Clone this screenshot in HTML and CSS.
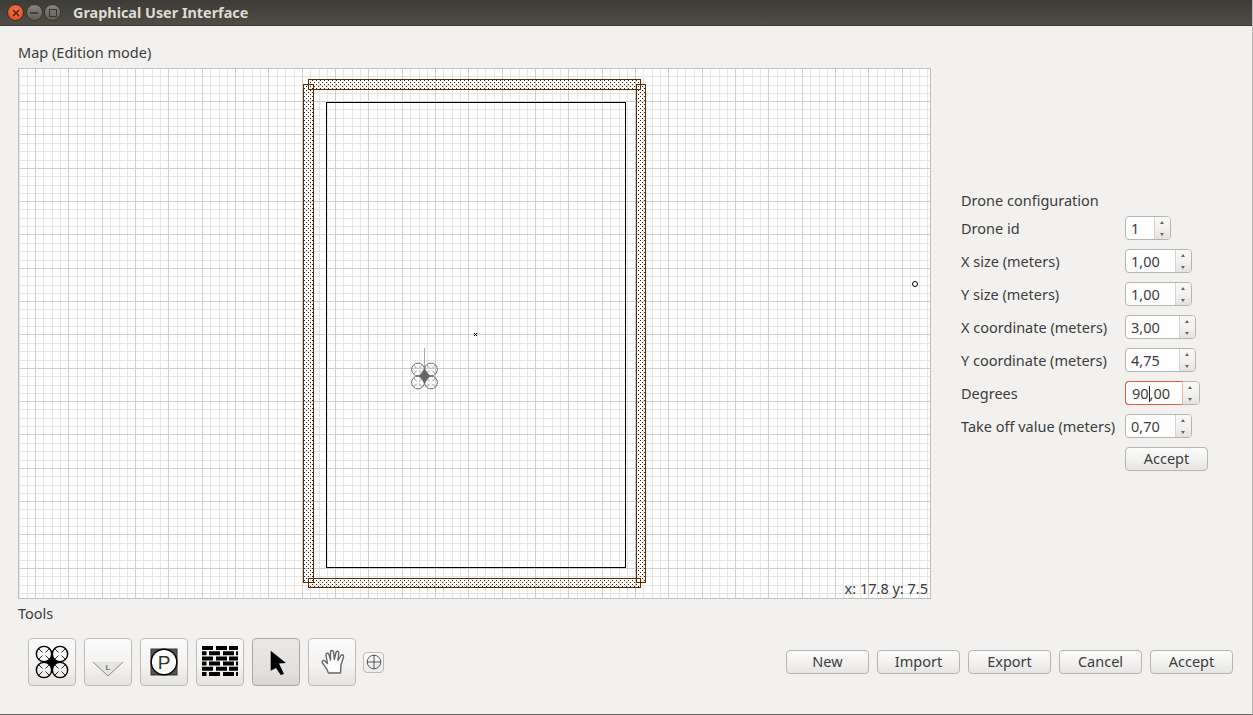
FILE: index.html
```html
<!DOCTYPE html>
<html lang="en">
<head>
<meta charset="utf-8">
<title>Graphical User Interface</title>
<link rel="stylesheet" href="styles.css">
</head>
<body>
<div class="window">
  <header class="titlebar">
    <div class="win-controls">
      <span class="win-btn win-close"><svg width="8" height="8" viewBox="0 0 8 8"><path d="M1 1L7 7M7 1L1 7" class="close-x"/></svg></span>
      <span class="win-btn win-min"><svg width="8" height="8" viewBox="0 0 8 8"><path d="M0 4H8" class="min-x"/></svg></span>
      <span class="win-btn win-max"><svg width="8" height="8" viewBox="0 0 8 8"><rect x="0.5" y="0.5" width="7" height="7" class="max-x"/></svg></span>
    </div>
    <h1 class="win-title">Graphical User Interface</h1>
  </header>

  <main class="content">
    <div class="workspace">
      <section class="map-col">
        <h2 class="group-title map-title">Map (Edition mode)</h2>
        <div class="map">
          <svg class="map-svg" width="911" height="529" viewBox="19 69 911 529">
            <defs>
              <pattern id="grid" patternUnits="userSpaceOnUse" x="2" y="68" width="100" height="100">
                <path class="minor" d="M8.5 0V100M17.5 0V100M25.5 0V100M41.5 0V100M50.5 0V100M58.5 0V100M75.5 0V100M83.5 0V100M92.5 0V100M0 8.5H100M0 17.5H100M0 25.5H100M0 41.5H100M0 50.5H100M0 58.5H100M0 75.5H100M0 83.5H100M0 92.5H100"/>
                <path class="major" d="M0.5 0V100M33.5 0V100M66.5 0V100M0 0.5H100M0 33.5H100M0 66.5H100"/>
              </pattern>
              <pattern id="dots" patternUnits="userSpaceOnUse" x="0" y="0" width="4" height="4">
                <rect x="0" y="0" width="1" height="1" class="dot"/>
                <rect x="2" y="2" width="1" height="1" class="dot"/>
              </pattern>
              <g id="rotor">
                <circle cx="0" cy="0" r="7.5"/>
                <path d="M-5.3 -5.3L-1.500 -1.500M1.500 1.500L5.300 5.300M-5.3 5.3L-1.500 1.500M1.500 -1.500L5.300 -5.300"/>
              </g>
            </defs>
            <rect x="19" y="69" width="911" height="529" fill="#fff"/>
            <rect x="19" y="69" width="911" height="529" fill="url(#grid)"/>

            <g class="wall">
              <rect x="303.5" y="84.5" width="10" height="498" fill="url(#dots)"/>
              <rect x="636.5" y="84.5" width="9" height="498" fill="url(#dots)"/>
              <rect x="308.5" y="79.5" width="332" height="10" fill="url(#dots)"/>
              <rect x="308.5" y="578.5" width="332" height="9" fill="url(#dots)"/>
            </g>
            <rect class="room" x="326.5" y="102.5" width="299" height="465"/>

            <g class="map-drone">
              <path class="heading" d="M424.5 348V376"/>
              <use href="#rotor" transform="translate(418 369.5) scale(.85)"/>
              <use href="#rotor" transform="translate(431 369.5) scale(.85)"/>
              <use href="#rotor" transform="translate(418 382.5) scale(.85)"/>
              <use href="#rotor" transform="translate(431 382.5) scale(.85)"/>
              <path class="hub" d="M424.500 368L427.500 373L430.500 376L427.500 379L424.500 384L421.500 379L418.500 376L421.500 373Z"/>
            </g>
            <path class="marker-x" d="M474 333L477 336M477 333L474 336"/>
            <circle class="marker-o" cx="915" cy="284" r="2.5"/>
          </svg>
          <span class="coords">x: 17.8 y: 7.5</span>
        </div>
      </section>

      <aside class="config">
        <h2 class="group-title config-title">Drone configuration</h2>
        <div class="form">
          <label class="field-label">Drone id</label>
          <div class="spin spin-id"><span class="spin-value">1</span><span class="steppers"><i class="up"></i><i class="down"></i></span></div>
          <label class="field-label">X size (meters)</label>
          <div class="spin spin-size"><span class="spin-value">1,00</span><span class="steppers"><i class="up"></i><i class="down"></i></span></div>
          <label class="field-label">Y size (meters)</label>
          <div class="spin spin-size"><span class="spin-value">1,00</span><span class="steppers"><i class="up"></i><i class="down"></i></span></div>
          <label class="field-label">X coordinate (meters)</label>
          <div class="spin spin-coord"><span class="spin-value">3,00</span><span class="steppers"><i class="up"></i><i class="down"></i></span></div>
          <label class="field-label">Y coordinate (meters)</label>
          <div class="spin spin-coord"><span class="spin-value">4,75</span><span class="steppers"><i class="up"></i><i class="down"></i></span></div>
          <label class="field-label">Degrees</label>
          <div class="spin spin-deg focused"><span class="spin-value">90<b class="caret"></b>,00</span><span class="steppers"><i class="up"></i><i class="down"></i></span></div>
          <label class="field-label">Take off value (meters)</label>
          <div class="spin spin-size"><span class="spin-value">0,70</span><span class="steppers"><i class="up"></i><i class="down"></i></span></div>
          <span></span>
          <button class="btn config-accept">Accept</button>
        </div>
      </aside>
    </div>

    <h2 class="group-title tools-title">Tools</h2>
    <div class="toolbar">
      <div class="tools">
        <button class="tool" aria-label="Drone">
          <svg width="36" height="36" viewBox="0 0 36 36" class="icon-drone">
            <use href="#rotor" transform="translate(10 10) scale(1.02)"/>
            <use href="#rotor" transform="translate(26 10) scale(1.02)"/>
            <use href="#rotor" transform="translate(10 26) scale(1.02)"/>
            <use href="#rotor" transform="translate(26 26) scale(1.02)"/>
            <path class="icon-hub" d="M18 11L20.500 15.500L25 18L20.500 20.500L18 25L15.500 20.500L11 18L15.500 15.500Z"/>
          </svg>
        </button>
        <button class="tool" aria-label="Landing">
          <svg width="36" height="36" viewBox="0 0 36 36">
            <path class="tri-fill" d="M3 18H33L18 32Z"/>
            <path class="tri-line" d="M3 18L18 32L33 18"/>
            <text class="tri-letter" x="18" y="26">L</text>
          </svg>
        </button>
        <button class="tool" aria-label="Pad">
          <svg width="36" height="36" viewBox="0 0 36 36">
            <rect class="pad-corner" x="5" y="5" width="26" height="26"/>
            <circle class="pad-circle" cx="18" cy="18" r="12.8"/>
            <text class="pad-letter" x="18" y="24.500">P</text>
          </svg>
        </button>
        <button class="tool" aria-label="Wall">
          <svg width="36" height="36" viewBox="0 0 36 36">
            <path class="bricks" d="M0 2H11V6H0ZM14 2H25V6H14ZM27 2H36V6H27ZM0 7.200H4.500V11.200H0ZM7 7.200H18V11.200H7ZM21 7.200H32V11.200H21ZM34 7.200H36V11.200H34ZM0 12.400H11V16.400H0ZM14 12.400H25V16.400H14ZM27 12.400H36V16.400H27ZM0 17.600H4.500V21.600H0ZM7 17.600H18V21.600H7ZM21 17.600H32V21.600H21ZM34 17.600H36V21.600H34ZM0 22.800H11V26.800H0ZM14 22.800H25V26.800H14ZM27 22.800H36V26.800H27ZM0 28H4.500V32H0ZM7 28H18V32H7ZM21 28H32V32H21ZM34 28H36V32H34Z"/>
          </svg>
        </button>
        <button class="tool tool-active" aria-label="Select">
          <svg width="36" height="36" viewBox="0 0 36 36">
            <path class="arrow" d="M12.700 6.700L28 19L21 19.500L26 30L22.700 31L18 24L12.700 26.700Z"/>
          </svg>
        </button>
        <button class="tool" aria-label="Pan">
          <svg width="36" height="36" viewBox="0 0 36 36">
            <g transform="translate(1.500 -2)">
              <path class="hand" d="M13 31C12 27 9 24 7 21C5.800 19.500 7.500 17.500 9.500 19L12 21.500L10.500 13C10.300 11 12.800 10.500 13.500 12.500L15 18L15 10C15 8 17.700 8 18 10L18.800 17.500L20.500 10.500C21 8.500 23.300 9 23.200 11L22.500 18.500L25.500 13.500C26.500 12 28.500 13 28 15L25.500 23C25 25 25.500 28 25 31Z"/>
              <path class="hand-base" d="M13 31H25"/>
            </g>
          </svg>
        </button>
        <button class="tool-small" aria-label="Center">
          <svg width="16" height="16" viewBox="0 0 16 16"><circle cx="8" cy="8" r="6.800"/><path d="M1 8H15M8 1V15"/></svg>
        </button>
      </div>
      <div class="actions">
        <button class="btn">New</button>
        <button class="btn">Import</button>
        <button class="btn">Export</button>
        <button class="btn">Cancel</button>
        <button class="btn">Accept</button>
      </div>
    </div>
  </main>
</div>
</body>
</html>
```
FILE: styles.css
```css
* { box-sizing: border-box; }
html, body { margin: 0; padding: 0; }
body {
  width: 1253px;
  height: 715px;
  overflow: hidden;
  font-family: "Noto Sans", "Open Sans", sans-serif;
  font-size: 14.5px;
  color: #3c3c3c;
  background: #f2f1f0;
}
.window {
  width: 1253px;
  height: 715px;
  display: flex;
  flex-direction: column;
  border-bottom: 1px solid #66645f;
  border-right: 1px solid #b9b8b5;
}
.titlebar {
  height: 26px;
  flex: none;
  display: flex;
  align-items: center;
  background: linear-gradient(#3c3b37, #4f4d46);
  border-bottom: 1px solid #3a3934;
}
.win-controls {
  display: flex;
  gap: 1.5px;
  margin-left: 7px;
  width: 66px;
}
.win-btn {
  width: 17px;
  height: 17px;
  border-radius: 50%;
  display: flex;
  align-items: center;
  justify-content: center;
}
.win-close { background: radial-gradient(circle at 50% 40%, #f2764a, #d9481c); border: 1px solid #3a2a20; }
.win-min, .win-max { background: linear-gradient(#86847c, #5f5d56); border: 1px solid #37362f; }
.close-x { stroke: #4a1a08; stroke-width: 1.4; fill: none; }
.min-x { stroke: #37362f; stroke-width: 1.5; fill: none; }
.max-x { stroke: #37362f; stroke-width: 1; fill: none; }
.win-title {
  margin: 0;
  font-size: 14.4px;
  font-weight: 700;
  color: #dfdbd2;
  line-height: 26px;
}
.content {
  flex: 1;
  display: flex;
  flex-direction: column;
  padding: 16px 19px 0 18px;
}
.workspace {
  display: flex;
  gap: 30px;
  align-items: flex-start;
}
.map-col { width: 913px; flex: none; }
.group-title {
  margin: 0;
  font-size: 14.5px;
  font-weight: 400;
  line-height: 20px;
}
.map-title { margin-bottom: 6px; }
.map {
  position: relative;
  width: 913px;
  height: 531px;
  border: 1px solid #c0bfbc;
  background: #fff;
}
.map-svg { display: block; }
.minor { stroke: #e6e6e6; stroke-width: 1; fill: none; }
.major { stroke: #cecece; stroke-width: 1; fill: none; }
.dot { fill: #3c2410; }
.wall rect { stroke: #5e2c00; stroke-width: 1; }
.room { fill: none; stroke: #000; stroke-width: 1; }
.map-drone { stroke: #777; fill: none; }
.map-drone .heading { stroke: #aaa; }
.map-drone use { stroke: #666; stroke-width: 1.1; }
.map-drone .hub { fill: #666; stroke: none; }
.marker-x { stroke: #000; fill: none; stroke-width: 1; }
.marker-o { stroke: #000; fill: #fff; stroke-width: 1; }
#rotor { fill: none; }
#rotor path { stroke-width: .8; }
.coords {
  position: absolute;
  right: 2px;
  bottom: 1px;
  line-height: 18px;
}
.config { width: 250px; flex: none; padding-top: 148px; }
.config-title { margin-bottom: 6px; }
.form {
  display: grid;
  grid-template-columns: 164px 1fr;
  grid-auto-rows: 24px;
  row-gap: 9px;
  align-items: center;
  justify-items: start;
}
.field-label { line-height: 24px; white-space: nowrap; }
.spin {
  display: flex;
  height: 24px;
  border: 1px solid #b6b5b1;
  border-radius: 4px;
  background: #fff;
}
.spin-id { width: 46px; }
.spin-size { width: 67px; }
.spin-coord { width: 71px; }
.spin-deg { width: 75px; }
.spin-value {
  flex: 1;
  padding-left: 5px;
  line-height: 23px;
}
.focused .spin-value {
  margin: -1px 0 -1px -1px;
  padding-left: 6px;
  line-height: 23px;
  border: 1px solid #e0603a;
  border-right-color: #efb8a4;
  border-radius: 4px 0 0 4px;
}
.caret {
  display: inline-block;
  width: 1px;
  height: 16px;
  background: #222;
  vertical-align: -3px;
}
.steppers {
  width: 16px;
  flex: none;
  display: flex;
  flex-direction: column;
  border-left: 1px solid #d5d4d0;
  border-radius: 0 3px 3px 0;
  background: linear-gradient(#f8f8f7, #f3f2f1 50%, #e3e2e0);
}
.focused .steppers { border-left: 0; }
.steppers i { flex: 1; position: relative; display: block; }
.steppers i::after {
  content: "";
  position: absolute;
  left: 5px;
  top: 4px;
  border-left: 2px solid transparent;
  border-right: 2px solid transparent;
}
.steppers .up::after { border-bottom: 3px solid #666; }
.steppers .down::after { border-top: 3px solid #666; top: 5px; }
.btn {
  width: 83px;
  height: 24px;
  padding: 0 0 1px;
  font: inherit;
  color: inherit;
  line-height: 21px;
  border: 1px solid #b6b5b1;
  border-radius: 4px;
  background: linear-gradient(#fbfbfb, #f3f2f1 50%, #e6e5e3);
}
.tools-title { margin-top: 4px; }
.toolbar {
  display: flex;
  justify-content: space-between;
  align-items: center;
  margin-top: 15px;
  padding-left: 10px;
}
.tools { display: flex; align-items: center; gap: 8px; }
.actions { display: flex; gap: 8px; }
.tool {
  width: 48px;
  height: 48px;
  padding: 0;
  display: flex;
  align-items: center;
  justify-content: center;
  border: 1px solid #bdbcb8;
  border-radius: 4px;
  background: linear-gradient(#fbfbfb, #f4f3f2 55%, #e4e3e1);
}
.tool-active {
  border-color: #aaa9a5;
  background: linear-gradient(#e9e8e6, #e2e1df 70%, #d8d7d5);
}
.tool-small {
  width: 21px;
  height: 21px;
  margin-left: -1px;
  padding: 0;
  display: flex;
  align-items: center;
  justify-content: center;
  border: 1px solid #bdbcb8;
  border-radius: 4px;
  background: linear-gradient(#fbfbfb, #ecebe9);
}
.tool-small circle, .tool-small path { fill: none; stroke: #555; stroke-width: 1; }
.icon-drone use { stroke: #000; stroke-width: 1.4; }
.icon-hub { fill: #000; }
.tri-fill { fill: #e5e4e2; }
.tri-line { fill: none; stroke: #8a8a88; stroke-width: 1; }
.tri-letter { font-size: 8px; font-weight: 700; text-anchor: middle; fill: #777; }
.pad-corner { fill: #555; stroke: #333; stroke-width: 1; }
.pad-circle { fill: #fff; stroke: #000; stroke-width: 1.4; }
.pad-letter { font-size: 19px; text-anchor: middle; fill: #333; }
.bricks { fill: #000; }
.arrow { fill: #000; }
.hand { fill: #fff; stroke: #666; stroke-width: 1.4; stroke-linejoin: round; }
.hand-base { stroke: #888; stroke-width: 1.5; fill: none; }
```
